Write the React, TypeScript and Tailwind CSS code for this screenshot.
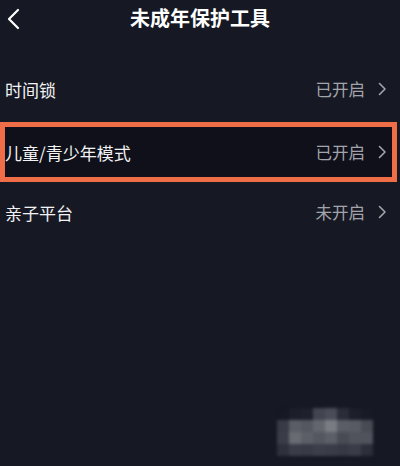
import React from "react";

const Chevron = () => (
  <svg width="9" height="14" viewBox="0 0 9 14" className="ml-[13px] shrink-0">
    <polyline points="1.5,1.5 7,7 1.5,12.5" fill="none" stroke="#a3a4ab" strokeWidth="1.6" strokeLinecap="round" strokeLinejoin="round" />
  </svg>
);

const Status = ({ text }: { text: string }) => (
  <div className="flex items-center">
    <span className="text-[16.5px] text-[#a3a4ab] leading-none">{text}</span>
    <Chevron />
  </div>
);

const Row = ({ label, status }: { label: string; status: string }) => (
  <div className="flex items-center justify-between h-[60px] pl-[5px] pr-[13px]">
    <span className="text-[17px] text-[#f2f2f4] leading-none">{label}</span>
    <Status text={status} />
  </div>
);

const mosaic: string[] = [
  "#161823", "#1c1e29", "#1e202b", "#42444f", "#4a4c57", "#2a2c37", "#1c1e29", "#181a25",
  "#383a46", "#5a5c66", "#555760", "#63656f", "#7a7c84", "#5a5c66", "#585a64", "#484a54",
  "#3a3c48", "#696b73", "#5c5e68", "#555760", "#5c5e68", "#484a54", "#50525c", "#50525c",
  "#2e303c", "#3a3c48", "#383a46", "#3c3e4a", "#3a3c48", "#363844", "#3a3c48", "#2c2e3a",
];

export default function App() {
  return (
    <div
      className="relative w-[400px] h-[466px] overflow-hidden bg-[#161823]"
      style={{ fontFamily: '"Noto Sans CJK SC", "Noto Sans", sans-serif' }}
    >
      <div className="grid grid-cols-[1fr_auto_1fr] items-center h-[36px]">
        <div className="flex items-center pl-[6px] pt-[1px]">
          <svg width="14" height="22" viewBox="0 0 14 22">
            <polyline points="12,2 3,11 12,20" fill="none" stroke="#ffffff" strokeWidth="2.2" strokeLinecap="round" strokeLinejoin="round" />
          </svg>
        </div>
        <span className="text-[20px] font-bold text-white leading-none">未成年保护工具</span>
        <div />
      </div>
      <div className="mt-[23px]">
        <Row label="时间锁" status="已开启" />
      </div>
      <div className="mt-[3px] w-[397px] h-[60px] border-[5px] border-[#ef6d47] bg-[#0f1019] flex items-center justify-between pl-0 pr-[5px]">
        <span className="text-[17px] text-[#f2f2f4] leading-none">儿童/青少年模式</span>
        <Status text="已开启" />
      </div>
      <Row label="亲子平台" status="未开启" />

      <div className="absolute left-[277px] top-[408px] grid grid-cols-8 w-[96px] blur-[1.5px] pointer-events-none">
        {mosaic.map((c, i) => (
          <div key={i} className="h-[12px]" style={{ backgroundColor: c }} />
        ))}
      </div>
    </div>
  );
}
